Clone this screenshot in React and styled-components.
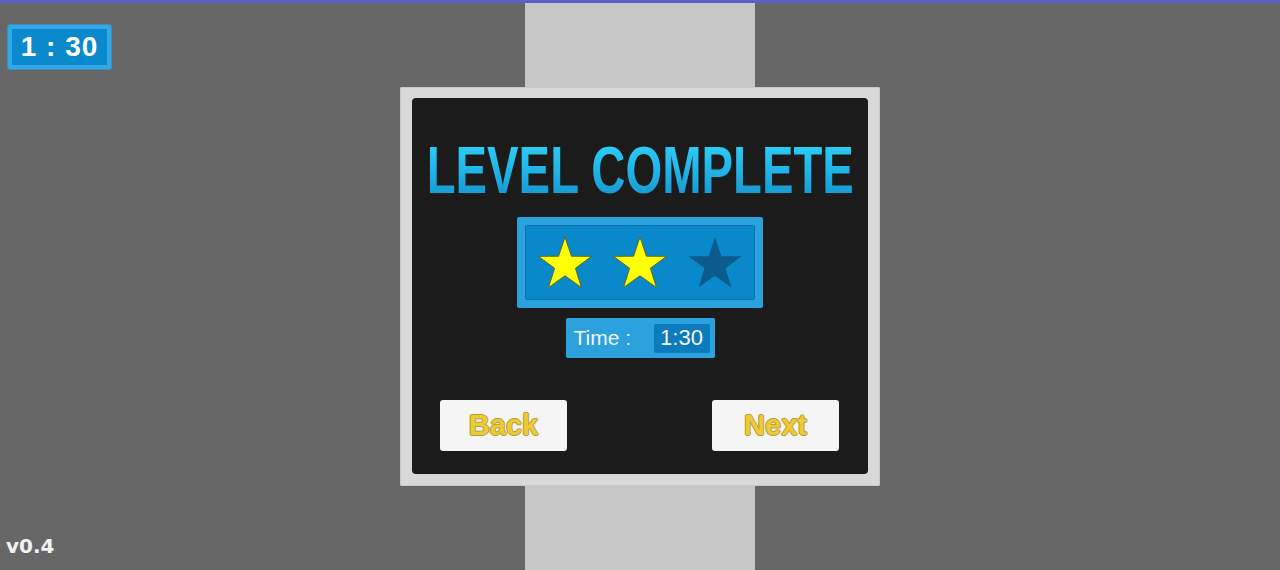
import styled, { createGlobalStyle } from 'styled-components';

const GlobalStyle = createGlobalStyle`
  html, body {
    margin: 0;
    padding: 0;
    background: #676767;
  }
`;

const Screen = styled.div`
  position: relative;
  width: 1280px;
  height: 567px;
  border-top: 3px solid #5563c4;
  overflow: hidden;
  display: flex;
  align-items: center;
  justify-content: center;
  background: linear-gradient(
    to right,
    #676767 0,
    #676767 525px,
    #c6c6c6 525px,
    #c6c6c6 755px,
    #676767 755px
  );
  font-family: 'Liberation Sans', Arial, sans-serif;
`;

const TimerBadge = styled.div`
  position: absolute;
  top: 22px;
  left: 8px;
  width: 95px;
  height: 36px;
  border: 4px solid #32a9e4;
  border-radius: 2px;
  background: #0a89cc;
  box-shadow: 0 0 0 1px #3b8cc0;
  color: #fff;
  font-weight: 700;
  font-size: 28px;
  letter-spacing: 1px;
  display: flex;
  align-items: center;
  justify-content: center;
`;

const Version = styled.div`
  position: absolute;
  left: 6px;
  bottom: 12px;
  color: #f2f2f2;
  font-family: 'DejaVu Sans', sans-serif;
  font-weight: 700;
  font-size: 20px;
`;

const Frame = styled.div`
  width: 456px;
  height: 376px;
  padding: 11px 12px 12px;
  background: #d9d9d9;
  border-radius: 2px;
  box-shadow: inset 0 0 0 1px #c8c8c8;
`;

const Panel = styled.div`
  height: 100%;
  box-sizing: border-box;
  padding-top: 39px;
  background: #1b1b1b;
  border-radius: 4px;
  display: flex;
  flex-direction: column;
  align-items: center;
`;

const Title = styled.h1`
  margin: 0;
  font-family: 'Liberation Sans', Arial, sans-serif;
  font-weight: 700;
  font-size: 66px;
  line-height: 66px;
  white-space: nowrap;
  transform: scaleX(0.716);
  background: linear-gradient(to bottom, #30d4fb 0%, #22b8ea 45%, #1590cb 100%);
  -webkit-background-clip: text;
  background-clip: text;
  color: transparent;
`;

const StarBox = styled.div`
  margin-top: 14px;
  width: 246px;
  height: 91px;
  box-sizing: border-box;
  padding: 8px;
  background: #2ba2de;
  border-radius: 2px;
`;

const StarTray = styled.div`
  height: 100%;
  box-sizing: border-box;
  border: 1px solid #0a72ad;
  border-radius: 2px;
  background: #0a89ca;
  display: flex;
  align-items: center;
  justify-content: center;
  gap: 19px;
`;

const TimeBox = styled.div`
  margin-top: 10px;
  width: 149px;
  height: 40px;
  box-sizing: border-box;
  padding: 0 5px 0 8px;
  background: #2ba2de;
  border-radius: 2px;
  display: flex;
  align-items: center;
  justify-content: space-between;
  color: #f4f4f4;
  font-size: 21px;
`;

const TimeValue = styled.span`
  width: 56px;
  height: 29px;
  background: #0b7bbc;
  border-radius: 2px;
  display: flex;
  align-items: center;
  justify-content: center;
  font-size: 22px;
`;

const ButtonRow = styled.div`
  margin-top: 42px;
  align-self: stretch;
  padding: 0 29px 0 28px;
  display: flex;
  justify-content: space-between;
`;

const Button = styled.button`
  width: 127px;
  height: 51px;
  border: none;
  border-radius: 3px;
  background: #f5f5f5;
  font-family: 'Liberation Sans', Arial, sans-serif;
  font-weight: 700;
  font-size: 29px;
  color: #ebcb3a;
  text-shadow: 1px 0 0 #bb9d2a, -1px 0 0 #bb9d2a, 0 1px 0 #bb9d2a,
    0 -1px 0 #bb9d2a;
  cursor: pointer;
`;

function Star({ lit }) {
  return (
    <svg width="56" height="54" viewBox="0 0 56 54">
      <polygon
        points="28,1 34.4,20.2 54.6,20.3 38.4,32.3 44.5,51.6 28,39.8 11.5,51.6 17.6,32.3 1.4,20.3 21.6,20.2"
        fill={lit ? '#ffff0a' : '#0b5b8f'}
        stroke={lit ? '#5a6a20' : 'none'}
        strokeWidth="1"
        strokeLinejoin="miter"
      />
    </svg>
  );
}

export default function App() {
  const stars = [true, true, false];

  return (
    <>
      <GlobalStyle />
      <Screen>
        <TimerBadge>1 : 30</TimerBadge>
        <Frame>
          <Panel>
            <Title>LEVEL COMPLETE</Title>
            <StarBox>
              <StarTray>
                {stars.map((lit, i) => (
                  <Star key={i} lit={lit} />
                ))}
              </StarTray>
            </StarBox>
            <TimeBox>
              <span>Time :</span>
              <TimeValue>1:30</TimeValue>
            </TimeBox>
            <ButtonRow>
              <Button>Back</Button>
              <Button>Next</Button>
            </ButtonRow>
          </Panel>
        </Frame>
        <Version>v0.4</Version>
      </Screen>
    </>
  );
}
